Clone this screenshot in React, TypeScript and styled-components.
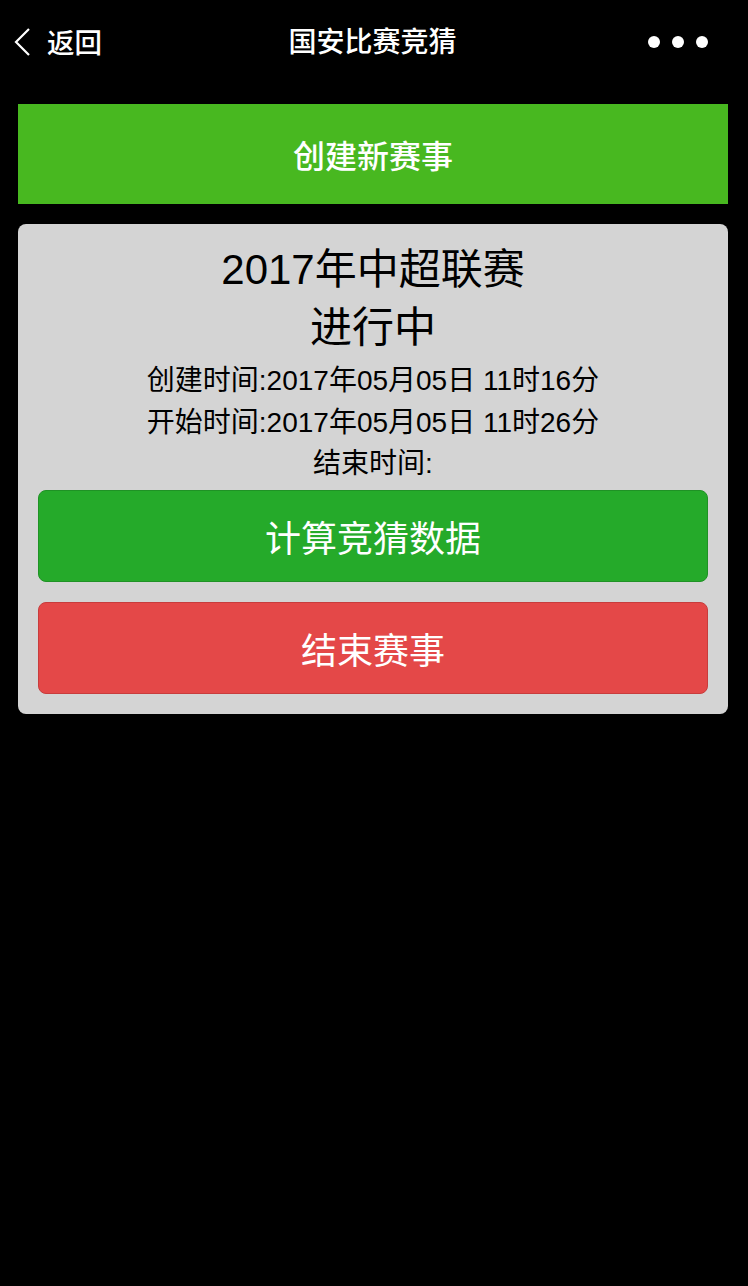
import React from "react";
import styled, { createGlobalStyle } from "styled-components";

const Global = createGlobalStyle`
  html, body { margin: 0; padding: 0; background: #000; }
  body { font-family: "Liberation Sans", "Noto Sans CJK SC", sans-serif; }
  #root { min-height: 1286px; background: #000; }
`;

const Page = styled.div`
  width: 748px;
  min-height: 1286px;
  background: #000;
  display: flex;
  flex-direction: column;
`;

const NavBar = styled.header`
  height: 84px;
  display: grid;
  grid-template-columns: 1fr auto 1fr;
  align-items: center;
  color: #fff;
  font-family: "Noto Sans CJK SC", sans-serif;
`;

const Back = styled.div`
  display: flex;
  align-items: center;
  gap: 16px;
  padding-left: 13px;
  font-size: 27.5px;
  font-weight: 500;
`;

const BackLabel = styled.span`
  margin-top: -3px;
`;

const Title = styled.div`
  font-size: 28px;
  font-weight: 500;
  margin-top: -4px;
  margin-left: -3px;
`;

const More = styled.div`
  justify-self: end;
  display: flex;
  gap: 12px;
  padding-right: 40px;
`;

const Dot = styled.span`
  width: 12px;
  height: 12px;
  border-radius: 50%;
  background: #fff;
`;

const Content = styled.main`
  display: flex;
  flex-direction: column;
  gap: 20px;
  padding: 20px 20px 0 18px;
`;

const CreateButton = styled.div`
  height: 100px;
  background: #48b820;
  color: #fff;
  display: flex;
  align-items: center;
  justify-content: center;
  font-family: "Noto Sans CJK SC", sans-serif;
  font-size: 32px;
  font-weight: 500;
`;

const Card = styled.section`
  background: #d4d4d4;
  border-radius: 8px;
  padding: 17px 20px 20px;
  display: flex;
  flex-direction: column;
  align-items: stretch;
  text-align: center;
  color: #000;
`;

const Heading = styled.div`
  font-size: 42px;
  line-height: 58px;
`;

const InfoBlock = styled.div`
  margin-top: 3px;
  display: flex;
  flex-direction: column;
`;

const Info = styled.div`
  font-size: 28px;
  line-height: 41.5px;
`;

const ActionButton = styled.div<{ $tone: "green" | "red"; $gap: number }>`
  margin-top: ${(p) => p.$gap}px;
  height: 92px;
  box-sizing: border-box;
  border-radius: 8px;
  border: 1px solid ${(p) => (p.$tone === "green" ? "#1f9225" : "#c83c3c")};
  background: ${(p) => (p.$tone === "green" ? "#25aa2a" : "#e44848")};
  color: #fff;
  display: flex;
  align-items: center;
  justify-content: center;
  font-family: "Noto Sans CJK SC", sans-serif;
  font-size: 36px;
`;

export default function App() {
  return (
    <Page>
      <Global />
      <NavBar>
        <Back>
          <svg width="18" height="30" viewBox="0 0 18 30">
            <path d="M16 2 L3 15 L16 28" fill="none" stroke="#fff" strokeWidth="2.2" />
          </svg>
          <BackLabel>返回</BackLabel>
        </Back>
        <Title>国安比赛竞猜</Title>
        <More>
          <Dot />
          <Dot />
          <Dot />
        </More>
      </NavBar>
      <Content>
        <CreateButton>创建新赛事</CreateButton>
        <Card>
          <Heading>2017年中超联赛</Heading>
          <Heading>进行中</Heading>
          <InfoBlock>
            <Info>创建时间:2017年05月05日 11时16分</Info>
            <Info>开始时间:2017年05月05日 11时26分</Info>
            <Info>结束时间:</Info>
          </InfoBlock>
          <ActionButton $tone="green" $gap={5}>计算竞猜数据</ActionButton>
          <ActionButton $tone="red" $gap={20}>结束赛事</ActionButton>
        </Card>
      </Content>
    </Page>
  );
}
